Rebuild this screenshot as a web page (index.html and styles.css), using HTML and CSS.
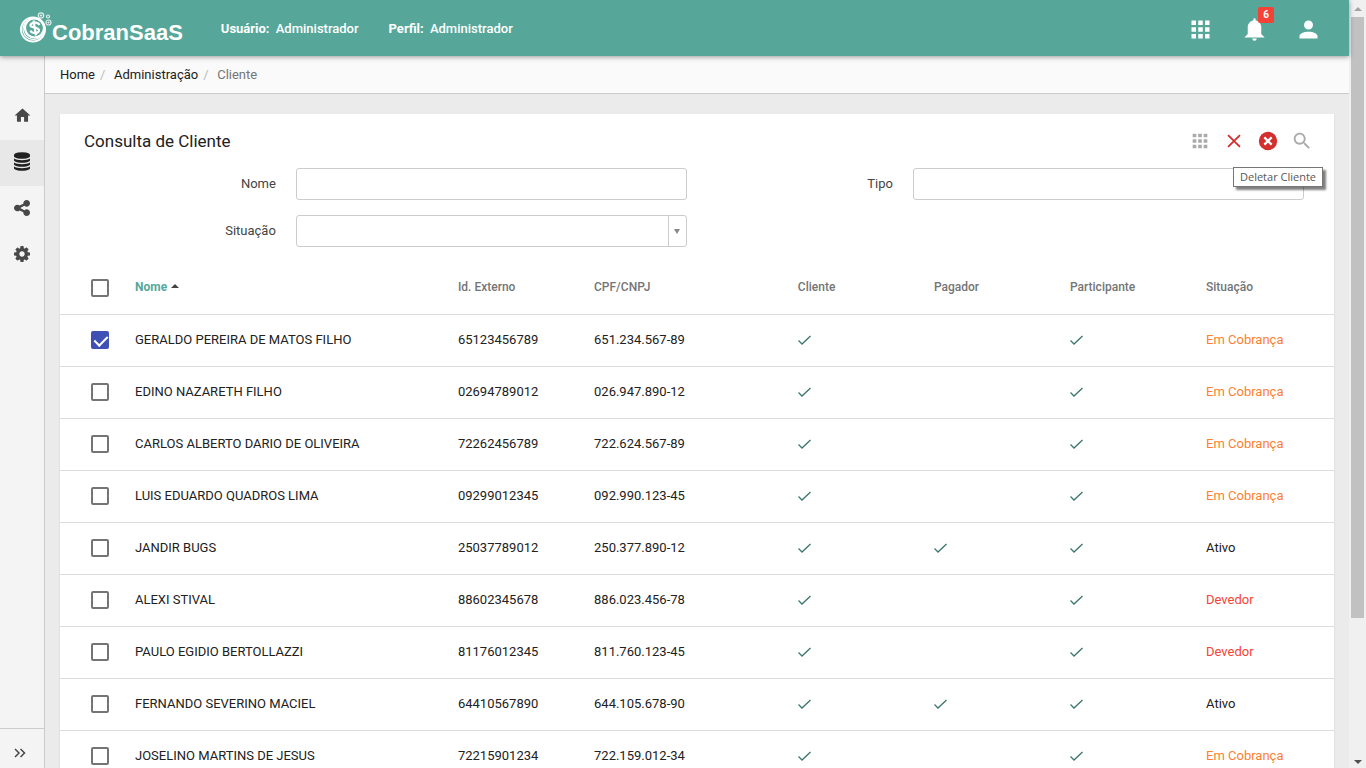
FILE: index.html
```
<!DOCTYPE html>
<html lang="pt-br">
<head>
    <meta charset="UTF-8">
    <meta name="viewport" content="width=device-width, initial-scale=1.0">
    <title>CobranSaaS - Cliente</title>
    <link rel="stylesheet" href="styles.css">
</head>
<body>
    <!-- Ícones reutilizados -->
    <svg class="sprite" aria-hidden="true">
        <symbol id="apps" viewBox="0 0 24 24"><path d="M4 8h4V4H4v4zm6 12h4v-4h-4v4zm-6 0h4v-4H4v4zm0-6h4v-4H4v4zm6 0h4v-4h-4v4zm6-10v4h4V4h-4zm-6 4h4V4h-4v4zm6 6h4v-4h-4v4zm0 6h4v-4h-4v4z"/></symbol>
        <symbol id="check" viewBox="0 0 14 12"><path d="M.5 6.500l3.500 3.500L12.500 2" fill="none" stroke="currentColor" stroke-width="1.300"/></symbol>
    </svg>

    <div class="page">
        <!-- Cabeçalho -->
        <header class="topbar">
            <a href="#" class="logo">
                <svg width="32" height="32" viewBox="0 0 32 32" fill="none" stroke="#fff" aria-hidden="true">
                    <circle cx="13" cy="17.500" r="12" stroke-width="2"/>
                    <circle cx="13.500" cy="17" r="10.500" stroke-width="1.200"/>
                    <circle cx="14.500" cy="16" r="9.500" stroke-width="2.200"/>
                    <path d="M19.500 13c-1-2-3-2.500-5-2.300-2.500.3-4.500 1.500-4 3 .5 2 8 1.500 8.500 4.300.3 2-1.800 3-4 3-2.300 0-4-.8-4.500-2.500M13.500 8.500l2.500 15" stroke-width="2.200"/>
                    <circle cx="21" cy="3.500" r="2.700" stroke-width="1.200" opacity=".8"/>
                    <circle cx="21" cy="3.500" r=".7"/>
                    <circle cx="28" cy="4.500" r="1.500" stroke-width="1.200" opacity=".8"/>
                    <circle cx="28.500" cy="10.500" r="2.500" stroke-width="1.200" opacity=".8"/>
                    <circle cx="28.500" cy="10.500" r=".6"/>
                </svg>
                <span>CobranSaaS</span>
            </a>
            <p class="session"><b>Usuário:</b> Administrador</p>
            <p class="session"><b>Perfil:</b> Administrador</p>
            <div class="top-actions">
                <button type="button" aria-label="Aplicativos"><svg><use href="#apps"/></svg></button>
                <button type="button" aria-label="Notificações">
                    <svg viewBox="0 0 24 24"><path d="M14 20a2 2 0 0 1-4 0zM12 2a1 1 0 0 1 1 1v1.080C15.840 4.560 18 7.030 18 10v6l3 3H3l3-3v-6c0-2.970 2.160-5.440 5-5.920V3a1 1 0 0 1 1-1z"/></svg>
                    <span class="badge">6</span>
                </button>
                <button type="button" aria-label="Perfil"><svg viewBox="0 0 24 24"><path d="M12 4a4 4 0 1 1 0 8 4 4 0 0 1 0-8zm0 10c4.420 0 8 1.790 8 4v2H4v-2c0-2.210 3.580-4 8-4z"/></svg></button>
            </div>
        </header>

        <div class="body">
            <!-- Menu lateral -->
            <nav class="sidebar">
                <a href="#" aria-label="Início"><svg width="19" height="19" viewBox="0 0 24 24"><path d="M10 20v-6h4v6h5v-8h3L12 3 2 12h3v8z"/></svg></a>
                <a href="#" class="active" aria-label="Administração"><svg width="16" height="19" viewBox="0 0 1536 1792"><path d="M768 768q237 0 443-43t325-127v170q0 69-103 128t-280 93.500-385 34.500-385-34.500-280-93.500-103-128v-170q119 84 325 127t443 43zm0 768q237 0 443-43t325-127v170q0 69-103 128t-280 93.500-385 34.500-385-34.500-280-93.500-103-128v-170q119 84 325 127t443 43zm0-384q237 0 443-43t325-127v170q0 69-103 128t-280 93.500-385 34.500-385-34.500-280-93.500-103-128v-170q119 84 325 127t443 43zm0-1152q208 0 385 34.500t280 93.500 103 128v128q0 69-103 128t-280 93.500-385 34.500-385-34.500-280-93.500-103-128v-128q0-69 103-128t280-93.500 385-34.500z"/></svg></a>
                <a href="#" aria-label="Integrações"><svg width="16" height="16" viewBox="0 128 1536 1536"><path d="M1216 1024q133 0 226.500 93.500t93.500 226.500-93.500 226.500-226.500 93.500-226.500-93.500-93.500-226.500q0-12 2-34l-360-180q-92 86-218 86-133 0-226.500-93.500t-93.500-226.500 93.500-226.500 226.500-93.500q126 0 218 86l360-180q-2-22-2-34 0-133 93.500-226.500t226.500-93.500 226.500 93.500 93.500 226.500-93.500 226.500-226.500 93.500q-126 0-218-86l-360 180q2 22 2 34t-2 34l360 180q92-86 218-86z"/></svg></a>
                <a href="#" aria-label="Configurações"><svg width="16" height="16" viewBox="0 128 1536 1536"><path d="M1024 896q0-106-75-181t-181-75-181 75-75 181 75 181 181 75 181-75 75-181zm512-109v222q0 12-8 23t-20 13l-185 28q-19 54-39 91 35 50 107 138 10 12 10 25t-9 23q-27 37-99 108t-94 71q-12 0-26-9l-138-108q-44 23-91 38-16 136-29 186-7 28-36 28h-222q-14 0-24.500-8.500t-11.500-21.500l-28-184q-49-16-90-37l-141 107q-10 9-25 9-14 0-25-11-126-114-165-168-7-10-7-23 0-12 8-23 15-21 51-66.500t54-70.500q-27-50-41-99l-183-27q-13-2-21-12.500t-8-23.500v-222q0-12 8-23t19-13l186-28q14-46 39-92-40-57-107-138-10-12-10-24 0-10 9-23 26-36 98.500-107.500t94.500-71.500q13 0 26 10l138 107q44-23 91-38 16-136 29-186 7-28 36-28h222q14 0 24.500 8.500t11.500 21.500l28 184q49 16 90 37l142-107q9-9 24-9 13 0 25 10 129 119 165 170 7 8 7 22 0 12-8 23-15 21-51 66.500t-54 70.500q26 50 41 98l183 28q13 2 21 12.500t8 23.500z"/></svg></a>
                <button type="button" class="expand" aria-label="Expandir menu"><svg width="12" height="10" viewBox="0 0 12 10"><path d="M1 1l4 4-4 4M6.500 1l4 4-4 4" fill="none" stroke="currentColor" stroke-width="1.500"/></svg></button>
            </nav>

            <div class="content">
                <nav class="breadcrumb">
                    <a href="#">Home</a><i>/</i><a href="#">Administração</a><i>/</i><span>Cliente</span>
                </nav>

                <main class="card">
                    <div class="card-header">
                        <h1>Consulta de Cliente</h1>
                        <div class="tools">
                            <button type="button" aria-label="Colunas"><svg><use href="#apps"/></svg></button>
                            <button type="button" class="red" aria-label="Limpar"><svg viewBox="0 0 24 24"><path d="M5.500 5.500l13 13M18.500 5.500l-13 13" fill="none" stroke="currentColor" stroke-width="2"/></svg></button>
                            <button type="button" class="red" aria-describedby="tip" aria-label="Deletar">
                                <svg viewBox="0 0 24 24"><circle cx="12" cy="12" r="10"/><path d="M8 8l8 8M16 8l-8 8" stroke="#fff" stroke-width="2.500"/></svg>
                            </button>
                            <button type="button" aria-label="Pesquisar"><svg viewBox="0 0 24 24"><path d="M15.500 14h-.79l-.28-.27C15.410 12.590 16 11.110 16 9.500 16 5.910 13.090 3 9.500 3S3 5.910 3 9.500 5.910 16 9.500 16c1.610 0 3.090-.59 4.230-1.570l.27.28v.79l5 4.990L20.490 19l-4.990-5zm-6 0C7.010 14 5 11.990 5 9.500S7.010 5 9.500 5 14 7.010 14 9.500 11.990 14 9.500 14z"/></svg></button>
                            <span class="tooltip" id="tip" role="tooltip">Deletar Cliente</span>
                        </div>
                    </div>

                    <!-- Filtros -->
                    <form class="filters">
                        <div class="field">
                            <label for="nome">Nome</label>
                            <input type="text" id="nome">
                        </div>
                        <div class="field">
                            <label for="tipo">Tipo</label>
                            <input type="text" id="tipo">
                        </div>
                        <div class="field">
                            <label for="situacao">Situação</label>
                            <div class="select">
                                <select id="situacao">
                                    <option></option>
                                </select>
                                <span class="arrow"></span>
                            </div>
                        </div>
                    </form>

                    <!-- Clientes -->
                    <table class="clients">
                        <colgroup>
                            <col class="c-check"><col class="c-name"><col class="c-id"><col class="c-cpf"><col class="c-id"><col class="c-id"><col class="c-id"><col>
                        </colgroup>
                        <thead>
                            <tr>
                                <th><input type="checkbox" aria-label="Selecionar todos"></th>
                                <th class="sorted" aria-sort="ascending">Nome</th>
                                <th>Id. Externo</th>
                                <th>CPF/CNPJ</th>
                                <th>Cliente</th>
                                <th>Pagador</th>
                                <th>Participante</th>
                                <th>Situação</th>
                            </tr>
                        </thead>
                        <tbody>
                            <tr>
                                <td><input type="checkbox" aria-label="Selecionar" checked></td>
                                <td>GERALDO PEREIRA DE MATOS FILHO</td>
                                <td>65123456789</td>
                                <td>651.234.567-89</td>
                                <td><svg><use href="#check"/></svg></td>
                                <td></td>
                                <td><svg><use href="#check"/></svg></td>
                                <td class="cobranca">Em Cobrança</td>
                            </tr>
                            <tr>
                                <td><input type="checkbox" aria-label="Selecionar"></td>
                                <td>EDINO NAZARETH FILHO</td>
                                <td>02694789012</td>
                                <td>026.947.890-12</td>
                                <td><svg><use href="#check"/></svg></td>
                                <td></td>
                                <td><svg><use href="#check"/></svg></td>
                                <td class="cobranca">Em Cobrança</td>
                            </tr>
                            <tr>
                                <td><input type="checkbox" aria-label="Selecionar"></td>
                                <td>CARLOS ALBERTO DARIO DE OLIVEIRA</td>
                                <td>72262456789</td>
                                <td>722.624.567-89</td>
                                <td><svg><use href="#check"/></svg></td>
                                <td></td>
                                <td><svg><use href="#check"/></svg></td>
                                <td class="cobranca">Em Cobrança</td>
                            </tr>
                            <tr>
                                <td><input type="checkbox" aria-label="Selecionar"></td>
                                <td>LUIS EDUARDO QUADROS LIMA</td>
                                <td>09299012345</td>
                                <td>092.990.123-45</td>
                                <td><svg><use href="#check"/></svg></td>
                                <td></td>
                                <td><svg><use href="#check"/></svg></td>
                                <td class="cobranca">Em Cobrança</td>
                            </tr>
                            <tr>
                                <td><input type="checkbox" aria-label="Selecionar"></td>
                                <td>JANDIR BUGS</td>
                                <td>25037789012</td>
                                <td>250.377.890-12</td>
                                <td><svg><use href="#check"/></svg></td>
                                <td><svg><use href="#check"/></svg></td>
                                <td><svg><use href="#check"/></svg></td>
                                <td>Ativo</td>
                            </tr>
                            <tr>
                                <td><input type="checkbox" aria-label="Selecionar"></td>
                                <td>ALEXI STIVAL</td>
                                <td>88602345678</td>
                                <td>886.023.456-78</td>
                                <td><svg><use href="#check"/></svg></td>
                                <td></td>
                                <td><svg><use href="#check"/></svg></td>
                                <td class="devedor">Devedor</td>
                            </tr>
                            <tr>
                                <td><input type="checkbox" aria-label="Selecionar"></td>
                                <td>PAULO EGIDIO BERTOLLAZZI</td>
                                <td>81176012345</td>
                                <td>811.760.123-45</td>
                                <td><svg><use href="#check"/></svg></td>
                                <td></td>
                                <td><svg><use href="#check"/></svg></td>
                                <td class="devedor">Devedor</td>
                            </tr>
                            <tr>
                                <td><input type="checkbox" aria-label="Selecionar"></td>
                                <td>FERNANDO SEVERINO MACIEL</td>
                                <td>64410567890</td>
                                <td>644.105.678-90</td>
                                <td><svg><use href="#check"/></svg></td>
                                <td><svg><use href="#check"/></svg></td>
                                <td><svg><use href="#check"/></svg></td>
                                <td>Ativo</td>
                            </tr>
                            <tr>
                                <td><input type="checkbox" aria-label="Selecionar"></td>
                                <td>JOSELINO MARTINS DE JESUS</td>
                                <td>72215901234</td>
                                <td>722.159.012-34</td>
                                <td><svg><use href="#check"/></svg></td>
                                <td></td>
                                <td><svg><use href="#check"/></svg></td>
                                <td class="cobranca">Em Cobrança</td>
                            </tr>
                        </tbody>
                    </table>
                </main>
            </div>
        </div>
    </div>

    <!-- Barra de rolagem -->
    <div class="scrollbar" aria-hidden="true">
        <span class="up"></span>
        <div class="track"><div class="thumb"></div></div>
        <span class="down"></span>
    </div>
</body>
</html>
```
FILE: styles.css
```
* {
    box-sizing: border-box;
}
body {
    display: flex;
    height: 100vh;
    margin: 0;
    overflow: hidden;
    font-family: Roboto, sans-serif;
    font-size: 13px;
    color: #212121;
    background-color: #ebebeb;
}
button {
    padding: 0;
    border: none;
    background: none;
    color: inherit;
    font: inherit;
    cursor: pointer;
}
a {
    color: inherit;
    text-decoration: none;
}
svg {
    display: block;
    fill: currentColor;
}
.sprite {
    position: absolute;
    width: 0;
    height: 0;
}
.page {
    display: flex;
    flex-direction: column;
    flex: 1;
    min-width: 0;
}

/* Cabeçalho */
.topbar {
    position: relative;
    z-index: 1;
    display: flex;
    flex: none;
    align-items: center;
    height: 56px;
    padding: 0 27px 0 20px;
    background-color: #56a799;
    color: #fff;
    font-weight: 500;
    box-shadow: 0 1px 5px rgba(0, 0, 0, 0.4);
}
.logo {
    display: flex;
    margin-right: 38px;
    font: bold 22px/24px "Liberation Sans", sans-serif;
}
.logo svg {
    fill: none;
}
.logo span {
    padding-top: 9px;
}
.session {
    margin: 0 30px 0 0;
}
.session b {
    margin-right: 3px;
    font-weight: 700;
}
.top-actions {
    display: flex;
    gap: 27px;
    margin-left: auto;
    padding-top: 2px;
}
.top-actions button {
    position: relative;
}
.top-actions svg {
    width: 27px;
    height: 27px;
}
.badge {
    position: absolute;
    top: -9px;
    right: -6px;
    width: 16px;
    border-radius: 2px;
    background-color: #f44336;
    font-size: 10px;
    font-weight: 700;
    line-height: 16px;
}

/* Menu lateral */
.body {
    display: flex;
    flex: 1;
    min-height: 0;
}
.sidebar {
    display: flex;
    flex-direction: column;
    flex: none;
    width: 45px;
    padding-top: 38px;
    border-right: 1px solid #ccc;
    background-color: #f4f4f4;
    color: #484848;
}
.sidebar a {
    display: flex;
    align-items: center;
    justify-content: center;
    height: 46px;
    padding-bottom: 3px;
}
.sidebar .active {
    background-color: #e8e8e8;
    color: #212121;
}
.expand {
    height: 40px;
    margin-top: auto;
    padding: 8px 14px 0;
    border-top: 1px solid #ccc;
}

/* Conteúdo */
.content {
    flex: 1;
    min-width: 0;
    overflow: hidden;
}
.breadcrumb {
    display: flex;
    height: 38px;
    padding: 0 15px;
    border-bottom: 1px solid #ccc;
    background-color: #fafafa;
    line-height: 37px;
}
.breadcrumb i {
    width: 19px;
    padding-left: 5px;
    color: #bbb;
    font-style: normal;
}
.breadcrumb span {
    color: #757575;
}
.card {
    margin: 20px 15px;
    background-color: #fff;
    box-shadow: 0 1px 2px rgba(0, 0, 0, 0.1);
}
.card-header {
    display: flex;
    align-items: center;
    justify-content: space-between;
    height: 54px;
    padding: 0 21px 0 24px;
}
.card-header h1 {
    margin: 0;
    font-size: 17px;
    font-weight: 400;
}
.tools {
    position: relative;
    display: flex;
    gap: 12px;
    color: #aaa;
}
.tools svg {
    width: 22px;
    height: 22px;
}
.tools .red {
    color: #d32f2f;
}
.tooltip {
    position: absolute;
    top: 37px;
    right: -10px;
    padding: 0 6px;
    border: 1px solid #767676;
    background-color: #fff;
    box-shadow: 3px 3px 2px rgba(0, 0, 0, 0.5);
    color: #575757;
    font: 11px/18px "Open Sans", sans-serif;
    white-space: nowrap;
}

/* Filtros */
.filters {
    display: grid;
    grid-template-columns: 1fr 1fr;
    gap: 15px 0;
    padding: 0 30px 12px 10px;
}
.field {
    display: grid;
    grid-template-columns: 10fr 19fr;
    column-gap: 20px;
    line-height: 32px;
    text-align: right;
}
.field label {
    color: #444;
}
.field input,
.field select {
    width: 100%;
    height: 32px;
    padding: 0 8px;
    border: 1px solid #ccc;
    border-radius: 3px;
    background-color: #fff;
    font: inherit;
    line-height: 20px;
    appearance: none;
}
.select {
    position: relative;
}
.arrow {
    position: absolute;
    top: 1px;
    right: 1px;
    display: flex;
    align-items: center;
    justify-content: center;
    width: 18px;
    height: 30px;
    border-left: 1px solid #ccc;
    pointer-events: none;
}
.arrow::after {
    content: "";
    border: 3px solid transparent;
    border-top: 5px solid #888;
    border-bottom: none;
}

/* Tabela */
.clients {
    width: 100%;
    table-layout: fixed;
    border-collapse: separate;
    border-spacing: 0;
}
.c-check {
    width: 55px;
}
.c-name {
    width: 25.35%;
}
.c-id {
    width: 10.68%;
}
.c-cpf {
    width: 16%;
}
.clients th,
.clients td {
    height: 52px;
    padding: 0 0 2px 20px;
    border-bottom: 1px solid #ddd;
    text-align: left;
    white-space: nowrap;
}
.clients th {
    height: 56px;
    padding-bottom: 0;
    color: #757575;
    font-size: 12px;
    font-weight: 500;
}
.clients td:first-child {
    padding-left: 31px;
}
.clients th:first-child {
    padding: 2px 0 0 31px;
}
.clients .sorted {
    color: #56a799;
    font-weight: 700;
}
.sorted::after {
    content: "";
    display: inline-block;
    margin: 0 0 3px 4px;
    border: 4px solid transparent;
    border-top: none;
    border-bottom-color: #444;
    vertical-align: middle;
}
.clients svg {
    width: 14px;
    height: 12px;
    color: #3c766c;
}
.clients input {
    display: block;
    width: 18px;
    height: 18px;
    margin: 0;
    border: 2px solid #757575;
    border-radius: 2px;
    appearance: none;
}
.clients input:checked {
    border-color: #3f51b5;
    background-color: #3f51b5;
}
.clients input:checked::before {
    content: "";
    display: block;
    width: 6px;
    height: 11px;
    margin: 0 0 0 4px;
    border: solid #fff;
    border-width: 0 2px 2px 0;
    transform: rotate(45deg);
}
.clients .cobranca {
    color: #ff7f32;
}
.clients .devedor {
    color: #f44336;
}

/* Barra de rolagem */
.scrollbar {
    display: flex;
    flex-direction: column;
    align-items: center;
    flex: none;
    width: 17px;
    padding: 7px 0 4px;
    background-color: #f0f0f0;
}
.track {
    flex: 1;
    width: 13px;
    margin: 6px 0;
}
.thumb {
    height: 81.5%;
    background-color: #c1c1c1;
}
.up,
.down {
    border: 4px solid transparent;
}
.up {
    border-top: none;
    border-bottom-color: #a3a3a3;
}
.down {
    border-bottom: none;
    border-top-color: #505050;
}
```
